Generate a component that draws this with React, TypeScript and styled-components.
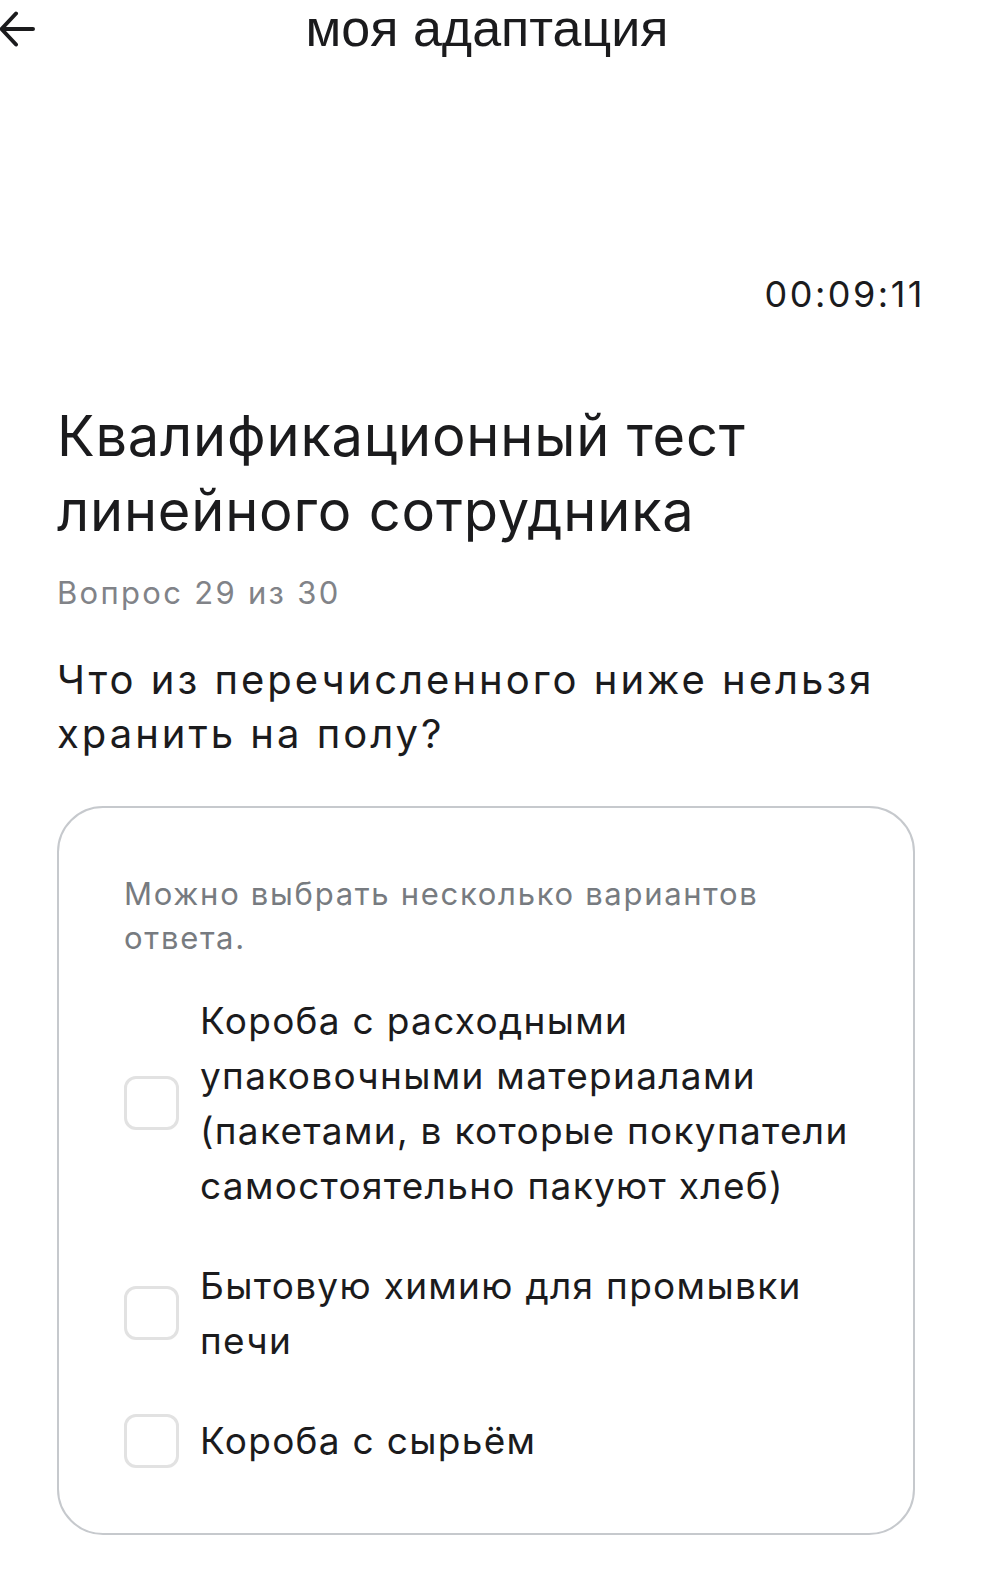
import styled, { createGlobalStyle } from "styled-components";

const GlobalStyle = createGlobalStyle`
  html, body {
    margin: 0;
    padding: 0;
    background: #ffffff;
  }
  body {
    font-family: Inter, "Liberation Sans", Arial, sans-serif;
    color: #1b1b1d;
  }
`;

const options = [
  "Короба с расходными упаковочными материалами (пакетами, в которые покупатели самостоятельно пакуют хлеб)",
  "Бытовую химию для промывки печи",
  "Короба с сырьём",
];

function BackArrow() {
  return (
    <svg width="36" height="36" viewBox="0 0 36 36" fill="none">
      <path
        d="M34 18H3M17 2.5L2.5 18L17 33.5"
        stroke="#1b1b1d"
        strokeWidth="4"
        strokeLinecap="round"
        strokeLinejoin="round"
      />
    </svg>
  );
}

export default function App() {
  return (
    <>
      <GlobalStyle />
      <Page>
        <Header>
          <BackButton aria-label="назад">
            <BackArrow />
          </BackButton>
          <HeaderTitle>моя адаптация</HeaderTitle>
          <span />
        </Header>

        <Main>
          <Timer>00:09:11</Timer>
          <TestTitle>Квалификационный тест линейного сотрудника</TestTitle>
          <Counter>Вопрос 29 из 30</Counter>
          <Question>Что из перечисленного ниже нельзя хранить на полу?</Question>

          <Card>
            <Hint>Можно выбрать несколько вариантов ответа.</Hint>
            <OptionList>
              {options.map((text) => (
                <Option key={text}>
                  <CheckBox type="checkbox" />
                  <OptionText>{text}</OptionText>
                </Option>
              ))}
            </OptionList>
          </Card>
        </Main>
      </Page>
    </>
  );
}

const Page = styled.div`
  background: #ffffff;
  padding-bottom: 40px;
`;

const Header = styled.header`
  display: grid;
  grid-template-columns: 1fr auto 1fr;
  align-items: center;
  padding-right: 25px;
  height: 57px;
`;

const BackButton = styled.button`
  display: flex;
  align-items: center;
  justify-self: start;
  padding: 0;
  margin: 0 0 0 -1px;
  border: none;
  background: none;
`;

const HeaderTitle = styled.h1`
  margin: 0;
  font-family: "Liberation Sans", Arial, sans-serif;
  font-weight: 400;
  font-size: 52px;
  line-height: 57px;
  color: #1b1b1d;
`;

const Main = styled.main`
  display: flex;
  flex-direction: column;
  padding: 215px 74px 0 57px;
`;

const Timer = styled.div`
  align-self: flex-end;
  font-size: 36px;
  line-height: 44px;
  letter-spacing: 2.5px;
  color: #1b1b1d;
`;

const TestTitle = styled.h2`
  margin: 83px 0 0;
  font-weight: 400;
  font-size: 56px;
  line-height: 75px;
  letter-spacing: 0.8px;
  max-width: 820px;
  color: #1b1b1d;
`;

const Counter = styled.div`
  margin-top: 24px;
  font-size: 31px;
  line-height: 40px;
  letter-spacing: 2.3px;
  color: #818388;
`;

const Question = styled.p`
  margin: 40px 0 0;
  font-size: 40px;
  line-height: 54px;
  letter-spacing: 3px;
  color: #1b1b1d;
`;

const Card = styled.section`
  box-sizing: border-box;
  width: 858px;
  margin-top: 45px;
  padding: 64px 45px 65px 65px;
  border: 2px solid #c6c9cd;
  border-radius: 46px;
`;

const Hint = styled.p`
  margin: 0 0 33px;
  font-size: 31px;
  line-height: 44px;
  letter-spacing: 1.7px;
  color: #777b80;
`;

const OptionList = styled.div`
  display: flex;
  flex-direction: column;
  gap: 45px;
`;

const Option = styled.label`
  display: flex;
  align-items: center;
  gap: 21px;
`;

const CheckBox = styled.input`
  appearance: none;
  flex: 0 0 auto;
  box-sizing: border-box;
  width: 55px;
  height: 54px;
  margin: 0;
  border: 3px solid #e2e2e2;
  border-radius: 12px;
  background: #ffffff;
`;

const OptionText = styled.span`
  font-size: 37px;
  line-height: 55px;
  letter-spacing: 1.3px;
  color: #1b1b1d;
`;
